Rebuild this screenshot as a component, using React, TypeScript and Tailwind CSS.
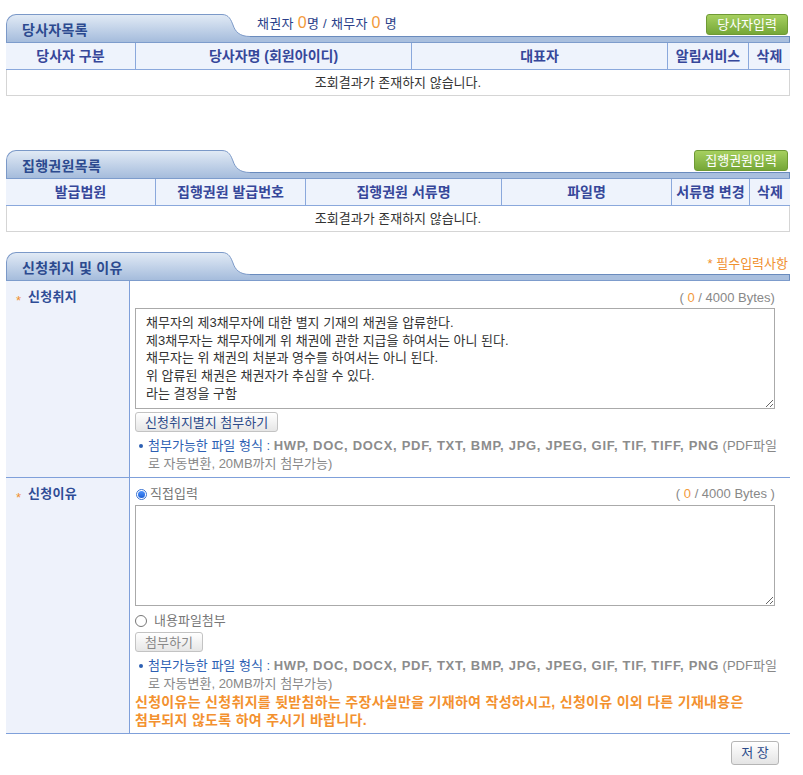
import React from 'react'

interface TabHeaderProps {
  title: string
  gid: string
  children?: React.ReactNode
  rightClass?: string
}

const TabHeader = ({ title, gid, children, rightClass }: TabHeaderProps) => {
  return (
    <div className="flex h-[29px] border-b border-[#7d9ccc]">
      <div className="w-[216px] shrink-0 rounded-tl-[10px] border-l border-t border-[#7b99c8] bg-gradient-to-b from-[#e1eaf5] to-[#a5bcdc] pl-[15px] pt-[6px] text-[14px] font-bold leading-[18px] tracking-[0.3px] text-[#2c4a8f]">
        {title}
      </div>
      <svg width="28" height="28" className="block shrink-0">
        <defs>
          <linearGradient id={gid} x1="0" y1="0" x2="0" y2="1">
            <stop offset="0" stopColor="#e1eaf5" />
            <stop offset="1" stopColor="#a5bcdc" />
          </linearGradient>
        </defs>
        <path d="M0 0.5 C7 0.5 9 6 11 11 C13 17 17 22.5 28 22.5 L28 28 L0 28 Z" fill={`url(#${gid})`} />
        <path d="M0 0.5 C7 0.5 9 6 11 11 C13 17 17 22.5 28 22.5" fill="none" stroke="#7b99c8" />
      </svg>
      <div className="flex flex-1 flex-col">
        <div className={`flex flex-1 justify-between pl-[7px] pr-[2px] ${rightClass ?? 'items-start'}`}>{children}</div>
        <div className="h-[6px] border-r border-t border-[#6a8bbd] bg-[#a9bfde]" />
      </div>
    </div>
  )
}

const GreenButton = ({ label }: { label: string }) => (
  <button className="flex h-[21px] items-center rounded-[3px] border border-[#6f9a35] bg-gradient-to-b from-[#a6d05f] to-[#76a737] px-[10px] text-[13px] leading-none text-white">
    {label}
  </button>
)

const HeaderCell = ({ label, last }: { label: string; last?: boolean }) => (
  <div
    className={`flex items-center justify-center text-[14px] font-bold text-[#36479a] ${last ? '' : 'border-r border-[#8aa8dc]'}`}
  >
    {label}
  </div>
)

const EmptyRow = () => (
  <div className="flex h-[26px] items-center justify-center border-x border-b border-[#d5d5d5] text-[13px] text-[#333]">
    조회결과가 존재하지 않습니다.
  </div>
)

const Bytes = ({ spaced }: { spaced?: boolean }) => (
  <span className="text-[13px] text-[#888]">
    ( <span className="text-[#f39a3a]">0</span> / 4000 Bytes{spaced ? ' )' : ')'}
  </span>
)

const FileHint = () => (
  <div className="flex pl-[4px] text-[13px] leading-[18px]">
    <span className="mr-[5px] mt-[7px] h-[4px] w-[4px] shrink-0 rounded-full bg-[#2c5fb3]" />
    <div className="whitespace-nowrap text-[#888]">
      <span className="text-[#2c5fb3]">첨부가능한 파일 형식 : </span>
      <span className="font-bold tracking-[0.7px] text-[#8c8c8c]">
        HWP, DOC, DOCX, PDF, TXT, BMP, JPG, JPEG, GIF, TIF, TIFF, PNG
      </span>{' '}
      (PDF파일
      <br />로 자동변환, 20MB까지 첨부가능)
    </div>
  </div>
)

const FieldLabel = ({ label }: { label: string }) => (
  <div className="flex gap-[7px] border-r border-[#7fa0da] bg-[#eef2fb] pl-[10px] pt-[8px]">
    <span className="pt-[4px] text-[13px] leading-[16px] text-[#f0902f]">*</span>
    <span className="text-[13px] font-bold leading-[16px] tracking-[0.3px] text-[#2e4c96]">{label}</span>
  </div>
)

const GrayButton = ({ label, muted }: { label: string; muted?: boolean }) => (
  <button
    className={`flex h-[20px] items-center rounded-[3px] border border-[#c3c3c3] bg-gradient-to-b from-white to-[#e6e6e6] px-[9px] text-[13px] leading-none ${muted ? 'text-[#888]' : 'text-[#2b4a8a]'}`}
  >
    {label}
  </button>
)

const claimText = `채무자의 제3채무자에 대한 별지 기재의 채권을 압류한다.
제3채무자는 채무자에게 위 채권에 관한 지급을 하여서는 아니 된다.
채무자는 위 채권의 처분과 영수를 하여서는 아니 된다.
위 압류된 채권은 채권자가 추심할 수 있다.
라는 결정을 구함`

export default function App() {
  return (
    <div className="ml-[6px] w-[784px] bg-white pt-[14px] font-['Liberation_Sans','Noto_Sans_CJK_KR',sans-serif]">
      {/* 당사자목록 */}
      <TabHeader title="당사자목록" gid="tabA">
        <span className="pt-[1px] text-[13px] leading-[16px] tracking-[0.3px] text-[#2b3f8a]">
          채권자 <span className="text-[16px] text-[#f39a3a]">0</span>명 / 채무자{' '}
          <span className="text-[16px] text-[#f39a3a]">0</span> 명
        </span>
        <GreenButton label="당사자입력" />
      </TabHeader>
      <div className="grid h-[27px] grid-cols-[130px_276px_256px_81px_1fr] border-b border-[#8aa8dc] bg-[#eef3fc]">
        <HeaderCell label="당사자 구분" />
        <HeaderCell label="당사자명 (회원아이디)" />
        <HeaderCell label="대표자" />
        <HeaderCell label="알림서비스" />
        <HeaderCell label="삭제" last />
      </div>
      <EmptyRow />

      {/* 집행권원목록 */}
      <div className="mt-[54px]">
        <TabHeader title="집행권원목록" gid="tabB">
          <span />
          <GreenButton label="집행권원입력" />
        </TabHeader>
        <div className="grid h-[27px] grid-cols-[150px_150px_196px_170px_78px_1fr] border-b border-[#8aa8dc] bg-[#eef3fc]">
          <HeaderCell label="발급법원" />
          <HeaderCell label="집행권원 발급번호" />
          <HeaderCell label="집행권원 서류명" />
          <HeaderCell label="파일명" />
          <HeaderCell label="서류명 변경" />
          <HeaderCell label="삭제" last />
        </div>
        <EmptyRow />
      </div>

      {/* 신청취지 및 이유 */}
      <div className="mt-[20px]">
        <TabHeader title="신청취지 및 이유" gid="tabC" rightClass="items-end pb-[2px]">
          <span />
          <span className="text-[13px] leading-[16px] text-[#f0902f]">* 필수입력사항</span>
        </TabHeader>

        <div className="grid grid-cols-[124px_1fr] border-b border-[#7fa0da]">
          <FieldLabel label="신청취지" />
          <div className="pb-[4px] pl-[5px] pr-[15px] pt-[8px]">
            <div className="flex h-[17px] items-center justify-end pr-[2px]">
              <Bytes />
            </div>
            <textarea
              className="mt-[2px] block h-[101px] w-[640px] border border-[#aaa] px-[10px] py-[5px] text-[13px] leading-[17.7px] text-[#333] outline-none"
              defaultValue={claimText}
            />
            <div className="mt-[3px] flex">
              <GrayButton label="신청취지별지 첨부하기" />
            </div>
            <div className="mt-[5px]">
              <FileHint />
            </div>
          </div>
        </div>

        <div className="grid grid-cols-[124px_1fr] border-b border-[#7fa0da]">
          <FieldLabel label="신청이유" />
          <div className="pb-[4px] pl-[5px] pr-[15px] pt-[8px]">
            <div className="flex h-[16px] items-center justify-between pr-[2px]">
              <label className="flex items-center gap-[3px] pl-[1px] text-[13px] text-[#777]">
                <span className="flex h-[11px] w-[11px] items-center justify-center rounded-full border border-[#3b73d1] bg-white">
                  <span className="h-[7px] w-[7px] rounded-full bg-gradient-to-b from-[#4d93ff] to-[#1a5fd6]" />
                </span>
                직접입력
              </label>
              <Bytes spaced />
            </div>
            <textarea className="mt-[3px] block h-[101px] w-[640px] border border-[#aaa] px-[10px] py-[5px] text-[13px] text-[#333] outline-none" />
            <label className="mt-[7px] flex h-[16px] items-center gap-[7px] text-[13px] text-[#777]">
              <span className="h-[12px] w-[12px] rounded-full border border-[#777] bg-white" />
              내용파일첨부
            </label>
            <div className="mt-[3px] flex">
              <GrayButton label="첨부하기" muted />
            </div>
            <div className="mt-[5px]">
              <FileHint />
            </div>
            <p className="text-[14px] font-bold leading-[18px] tracking-[0.3px] text-[#f3912f]">
              신청이유는 신청취지를 뒷받침하는 주장사실만을 기재하여 작성하시고, 신청이유 이외 다른 기재내용은
              <br />
              첨부되지 않도록 하여 주시기 바랍니다.
            </p>
          </div>
        </div>

        <div className="mt-[7px] flex justify-end pb-[10px] pr-[11px]">
          <button className="flex h-[24px] w-[48px] items-center justify-center rounded-[3px] border border-[#b5b5b5] bg-gradient-to-b from-white to-[#e4e4e4] text-[13px] text-[#2b4a8a]">
            저 장
          </button>
        </div>
      </div>
    </div>
  )
}
